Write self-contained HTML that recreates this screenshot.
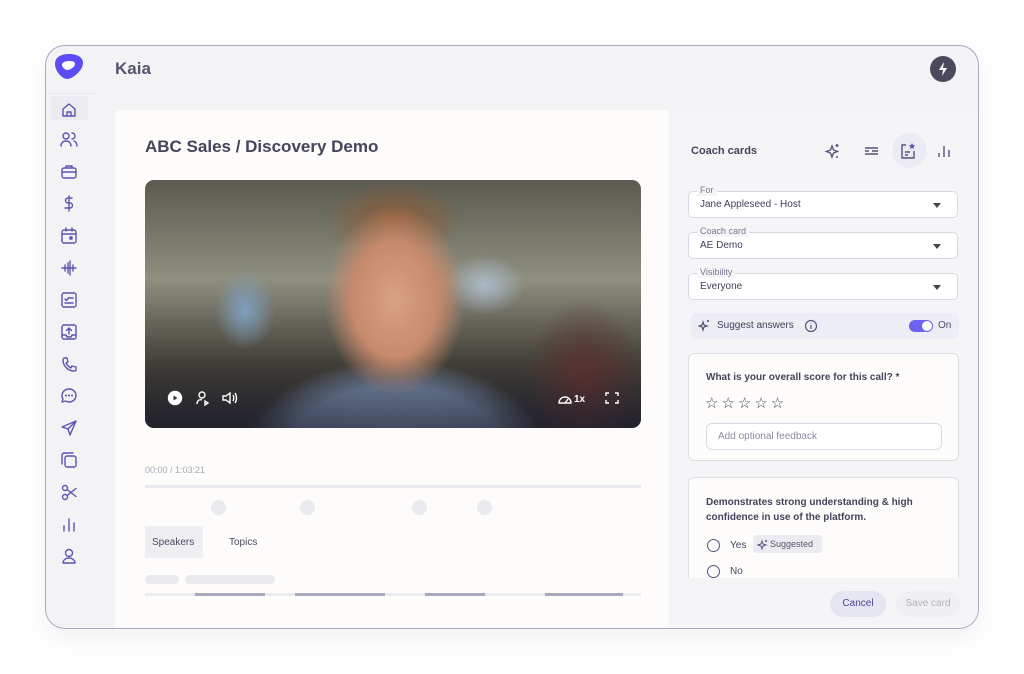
<!DOCTYPE html>
<html><head><meta charset="utf-8"><style>
*{box-sizing:border-box;margin:0;padding:0}
body{width:1024px;height:674px;background:#fff;font-family:"Liberation Sans",sans-serif;position:relative;overflow:hidden;color:#3f3f5a}
.win{position:absolute;left:45px;top:45px;width:934px;height:584px;border:1px solid #aaa9c2;border-radius:20px;background:#f3f3f6;overflow:hidden;box-shadow:0 10px 30px rgba(0,0,0,.06)}
.ab{position:absolute}
.main{position:absolute;left:69px;top:64px;width:554px;height:520px;background:#fdfcfb;border-radius:6px 0 0 0}
.right{position:absolute;left:624px;top:64px;width:310px;height:520px;background:#f5f5f8}
.sel{position:absolute;left:18px;width:270px;height:27px;border:1px solid #d9d8e2;border-radius:5px;background:#fff;font-size:10px;color:#3f3f5a;padding:7px 11px}
.sel .lb{position:absolute;top:-7px;left:8px;background:#f5f5f8;padding:0 3px;font-size:9px;color:#777790;line-height:11px}
.sel .ar{position:absolute;right:16px;top:11px;border:4px solid transparent;border-top:5px solid #444;border-bottom:0}
.card{position:absolute;left:18px;width:271px;background:#fdfcfb;border:1px solid #dedde6;border-radius:6px}
.pill{position:absolute;height:10px;border-radius:5px;background:#e9e9ee}
</style></head><body>
<div class="win">
 <svg class="ab" style="left:8px;top:7px" width="30" height="27" viewBox="0 0 30 27"><path d="M15 1C7 1 1 4 1 11c0 7 7 15 12 15 6 0 16-9 16-16C29 4 23 1 15 1z" fill="#5b4cf5"/><path d="M15 8c-5 0-7 2-7 4 0 2 3 5 5 5 3 0 8-3 8-6 0-2-2-3-6-3z" fill="#fff"/></svg>
 <div class="ab" style="left:0;top:47px;width:50px;height:1px;background:#e6e6ec"></div>
 <div class="ab" style="left:4px;top:50px;width:38px;height:24px;background:#ebebf1;border-radius:3px"></div>
 <svg width="50" height="500" class="ab" style="left:0;top:50px" fill="none" stroke="#5a55b0" stroke-width="1.4" stroke-linecap="round" stroke-linejoin="round">
  <path d="M17 13l6-5 6 5v7h-12z M21 20v-4h4v4"/>
  <g transform="translate(0,32)"><circle cx="20" cy="8" r="3"/><path d="M15 18c0-3 2-5 5-5s5 2 5 5 M26 5a3 3 0 010 6 M28 13c2 1 3 3 3 5"/></g>
  <g transform="translate(0,64)"><rect x="16" y="8" width="14" height="10" rx="2"/><path d="M20 8V6h6v2 M16 12h14"/></g>
  <g transform="translate(0,96)"><path d="M26 6h-4a2 2 0 000 5h2a2 2 0 010 5h-5 M23 4v15"/></g>
  <g transform="translate(0,128)"><rect x="16" y="6" width="14" height="13" rx="2"/><path d="M16 10h14 M20 4v3 M26 4v3"/><rect x="24" y="13" width="2" height="2" fill="#5a55b0"/></g>
  <g transform="translate(0,160)"><path d="M16 12h14 M19 9v6 M22 7v10 M24 5v14 M27 9v6"/></g>
  <g transform="translate(0,192)"><rect x="16" y="5" width="14" height="14" rx="2"/><path d="M19 11l1.5 1.5 2.5-3 M24 10h3 M19 15h8"/></g>
  <g transform="translate(0,224)"><rect x="16" y="5" width="14" height="14" rx="2"/><path d="M23 14V8 M20.5 10.5L23 8l2.5 2.5 M16 15h4l1 2h4l1-2h4"/></g>
  <g transform="translate(0,256)"><path d="M18 6l3 0 1 4-2 1c1 2 3 4 5 5l1-2 4 1v3c0 1-1 1-2 1-6 0-11-5-11-11 0-1 1-2 1-2z"/></g>
  <g transform="translate(0,288)"><path d="M23 5c4 0 7 3 7 6.5S27 18 23 18c-1 0-2 0-3-1l-4 1 1-3c-1-1-1-2-1-3.5C16 8 19 5 23 5z"/><path d="M20 11.5h.1 M23 11.5h.1 M26 11.5h.1" stroke-width="2"/></g>
  <g transform="translate(0,320)"><path d="M30 5l-14 6 6 2 2 6z M22 13l8-8"/></g>
  <g transform="translate(0,352)"><rect x="19" y="8" width="11" height="11" rx="2"/><path d="M16 16V7c0-1 1-2 2-2h9"/></g>
  <g transform="translate(0,384)"><circle cx="19" cy="8" r="2.5"/><circle cx="19" cy="17" r="2.5"/><path d="M21 9.5l9 7 M21 15.5l9-7"/></g>
  <g transform="translate(0,416)"><path d="M18 19v-5 M23 19V7 M28 19v-8"/></g>
  <g transform="translate(0,448)"><circle cx="23" cy="9" r="3.5"/><path d="M17 19c0-3 3-5 6-5s6 2 6 5z"/></g>
 </svg>
 <div class="ab" style="left:69px;top:13px;font-size:17px;font-weight:bold;color:#555570">Kaia</div>
 <div class="ab" style="left:884px;top:10px;width:26px;height:26px;border-radius:50%;background:#4a4a5c"><svg width="26" height="26"><path d="M14 6l-5 8h4l-1 6 5-8h-4z" fill="#fff"/></svg></div>

 <div class="main">
  <div class="ab" style="left:30px;top:27px;font-size:17px;font-weight:bold;color:#44445c">ABC Sales / Discovery Demo</div>
  <div class="ab" style="left:30px;top:70px;width:496px;height:248px;border-radius:9px;overflow:hidden;background:
   radial-gradient(ellipse 70px 95px at 250px 120px,#d9a184 0%,#c78a6c 60%,rgba(150,100,80,0) 100%),
   radial-gradient(ellipse 70px 40px at 250px 40px,#8a5a36 0%,rgba(120,80,50,0) 100%),
   radial-gradient(ellipse 150px 90px at 250px 270px,#7f93ae 0%,#6e819c 70%,rgba(90,100,120,0) 100%),
   radial-gradient(ellipse 40px 30px at 340px 105px,#aab9c8 0%,rgba(150,160,170,0) 100%),
   radial-gradient(ellipse 30px 40px at 100px 130px,#7fa0c0 0%,rgba(100,120,140,0) 100%),
   radial-gradient(ellipse 60px 80px at 440px 200px,#5a3030 0%,rgba(60,40,40,0) 100%),
   linear-gradient(180deg,#5a5a50 0%,#8f8f80 40%,#3f3c36 75%,#2a2a2c 100%)">
   <div class="ab" style="left:0;bottom:0;width:100%;height:60px;background:linear-gradient(rgba(30,30,40,0),rgba(30,30,45,.6))"></div>
   <svg class="ab" style="left:22px;top:209px" width="80" height="18" fill="none" stroke="#fff" stroke-width="1.4"><circle cx="8" cy="9" r="6.5" fill="#fff"/><path d="M6.5 6.5v5l4-2.5z" fill="#333" stroke="none"/><circle cx="35" cy="6" r="3"/><path d="M30 15c0-3 2-5 5-4 M38 12v4l3-2z"/><path d="M56 7h3l4-3v10l-4-3h-3z M66 6c1 2 1 4 0 6 M68 4c2 3 2 7 0 10"/></svg>
   <svg class="ab" style="left:410px;top:209px" width="80" height="18" fill="none" stroke="#fff" stroke-width="1.4"><path d="M4 14a6 6 0 1112 0z M10 14l3-4"/><text x="19" y="13" fill="#fff" stroke="none" font-size="10" font-family="Liberation Sans" font-weight="bold">1x</text><path d="M51 7V4h3 M60 4h3v3 M63 11v3h-3 M54 14h-3v-3"/></svg>
  </div>
  <div class="ab" style="left:30px;top:355px;font-size:9px;color:#a8a8b8">00:00 / 1:03:21</div>
  <div class="ab" style="left:30px;top:375px;width:496px;height:3px;background:#e9e9ee"></div>
  <div class="pill" style="left:96px;top:390px;width:15px;height:15px;border-radius:50%"></div>
  <div class="pill" style="left:185px;top:390px;width:15px;height:15px;border-radius:50%"></div>
  <div class="pill" style="left:297px;top:390px;width:15px;height:15px;border-radius:50%"></div>
  <div class="pill" style="left:362px;top:390px;width:15px;height:15px;border-radius:50%"></div>
  <div class="ab" style="left:30px;top:416px;width:58px;height:32px;background:#eeeef3;font-size:10px;color:#4a4a62;padding:11px 7px">Speakers</div>
  <div class="ab" style="left:114px;top:427px;font-size:10px;color:#4a4a62">Topics</div>
  <div class="pill" style="left:30px;top:465px;width:34px;height:9px"></div>
  <div class="pill" style="left:70px;top:465px;width:90px;height:9px"></div>
  <div class="ab" style="left:30px;top:483px;width:496px;height:3px;background:#ebebf0"></div>
  <div class="ab" style="left:80px;top:483px;width:70px;height:3px;background:#a9a8bc"></div>
  <div class="ab" style="left:180px;top:483px;width:90px;height:3px;background:#a9a8bc"></div>
  <div class="ab" style="left:310px;top:483px;width:60px;height:3px;background:#a9a8bc"></div>
  <div class="ab" style="left:430px;top:483px;width:78px;height:3px;background:#a9a8bc"></div>
 </div>

 <div class="right">
  <div class="ab" style="left:21px;top:35px;font-size:11px;font-weight:bold;color:#44445c">Coach cards</div>
  <div class="ab" style="left:222px;top:23px;width:35px;height:35px;border-radius:50%;background:#ebebf3"></div>
  <svg class="ab" style="left:150px;top:30px" width="150" height="22" fill="none" stroke="#55557a" stroke-width="1.4">
   <path d="M12 6l1.5 4 4 1.5-4 1.5-1.5 4-1.5-4-4-1.5 4-1.5z M17 4v3 M15.5 5.5h3 M17 16v2"/>
   <path d="M45 8h13 M45 11h4 M52 11h6 M45 14h13"/>
   <path d="M86 5h-4v13h12v-7 M85 12h5 M85 15h3"/><path d="M92 3l1 2 2 .5-1.5 1.5.5 2-2-1-2 1 .5-2-1.5-1.5 2-.5z" fill="#5a55b0" stroke="none"/>
   <path d="M119 17v-4 M124 17V6 M129 17v-7"/>
  </svg>
  <div class="sel" style="top:81px"><span class="lb">For</span>Jane Appleseed - Host<span class="ar"></span></div>
  <div class="sel" style="top:122px"><span class="lb">Coach card</span>AE Demo<span class="ar"></span></div>
  <div class="sel" style="top:163px"><span class="lb">Visibility</span>Everyone<span class="ar"></span></div>
  <div class="ab" style="left:20px;top:203px;width:269px;height:26px;background:#ededf5;border-radius:7px;font-size:10px;color:#3f3f5a;padding:7px 27px">Suggest answers</div>
  <svg class="ab" style="left:28px;top:209px" width="130" height="14" fill="none" stroke="#55557a" stroke-width="1.2"><path d="M5 3l1 3 3 1-3 1-1 3-1-3-3-1 3-1z M10 1v2 M9 2h2"/><circle cx="113" cy="7" r="5.5"/><path d="M113 6v4 M113 4v.5"/></svg>
  <div class="ab" style="left:239px;top:210px;width:24px;height:12px;border-radius:6px;background:#6c62f0"></div>
  <div class="ab" style="left:252px;top:211px;width:10px;height:10px;border-radius:50%;background:#fff"></div>
  <div class="ab" style="left:268px;top:210px;font-size:10px;color:#4a4a62">On</div>

  <div class="card" style="top:243px;height:108px">
   <div class="ab" style="left:17px;top:18px;font-size:10px;font-weight:bold;color:#44445c">What is your overall score for this call? *</div>
   <div class="ab" style="left:16px;top:40px;font-size:15px;color:#44445c;letter-spacing:3px">☆☆☆☆☆</div>
   <div class="ab" style="left:17px;top:69px;width:236px;height:27px;border:1px solid #d9d8e2;border-radius:6px;background:#fff;font-size:10px;color:#8a8aa0;padding:7px 11px">Add optional feedback</div>
  </div>
  <div class="card" style="top:367px;height:101px;border-bottom:none;border-radius:6px 6px 0 0;overflow:hidden">
   <div class="ab" style="left:17px;top:17px;font-size:10px;font-weight:bold;color:#44445c;line-height:15px;width:240px">Demonstrates strong understanding &amp; high confidence in use of the platform.</div>
   <div class="ab" style="left:18px;top:61px;width:13px;height:13px;border:1.4px solid #55557a;border-radius:50%"></div>
   <div class="ab" style="left:41px;top:62px;font-size:10px;color:#44445c">Yes</div>
   <div class="ab" style="left:64px;top:57px;width:69px;height:18px;background:#ebebf1;border-radius:3px;font-size:9px;color:#55556e;padding:4px 0 0 17px">Suggested</div>
   <svg class="ab" style="left:68px;top:61px" width="11" height="11" fill="none" stroke="#55557a" stroke-width="1"><path d="M5 2l1 3 3 1-3 1-1 3-1-3-3-1 3-1z M9 1v2 M8 2h2"/></svg>
   <div class="ab" style="left:18px;top:87px;width:13px;height:13px;border:1.4px solid #55557a;border-radius:50%"></div>
   <div class="ab" style="left:41px;top:88px;font-size:10px;color:#44445c">No</div>
  </div>
  <div class="ab" style="left:160px;top:481px;width:56px;height:26px;border-radius:13px;background:#e6e6f2;font-size:10px;color:#4a4590;text-align:center;padding-top:7px">Cancel</div>
  <div class="ab" style="left:226px;top:481px;width:64px;height:26px;border-radius:13px;background:#f0f0f3;font-size:10px;color:#b0b0bc;text-align:center;padding-top:7px">Save card</div>
 </div>
</div>
</body></html>
